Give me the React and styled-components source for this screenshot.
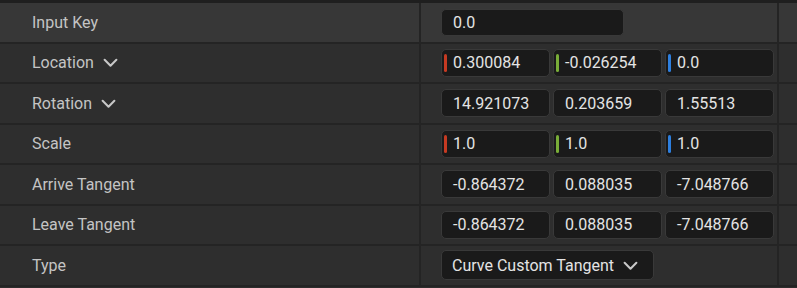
import React from "react";
import styled, { createGlobalStyle } from "styled-components";

const Global = createGlobalStyle`
  html, body { margin: 0; padding: 0; background: #2d2d2d; }
  body { font-family: Roboto, "Noto Sans", sans-serif; }
`;

const Panel = styled.div`
  width: 797px;
  height: 288px;
  overflow: hidden;
  background: #2d2d2d;
  border-top: 3px solid #1f1f1f;
  box-sizing: border-box;
`;

const Row = styled.div`
  display: grid;
  grid-template-columns: 421px 358px 1fr;
  height: 38.5px;
  border-bottom: 2px solid #242424;
  background: ${(p) => (p.$hover ? "#373737" : "#2e2e2e")};
`;

const LabelCell = styled.div`
  display: flex;
  align-items: center;
  gap: 9px;
  padding-left: 32px;
  border-right: 2px solid #242424;
  color: #c4c4c4;
  font-size: 16px;
`;

const ValueCell = styled.div`
  display: flex;
  align-items: center;
  gap: 3.5px;
  padding-left: 20px;
  border-right: 2px solid #242424;
`;

const Field = styled.div`
  position: relative;
  box-sizing: border-box;
  width: ${(p) => p.$w}px;
  height: ${(p) => p.$h || 28}px;
  display: flex;
  align-items: center;
  gap: 9px;
  padding-left: ${(p) => p.$pl || 11}px;
  background: #1a1a1a;
  border: 1px solid #393939;
  border-radius: 5px;
  color: #e4e4e4;
  font-size: 16px;
`;

const Axis = styled.span`
  position: absolute;
  left: 2px;
  top: 4px;
  bottom: 4px;
  width: 3px;
  border-radius: 2px;
  background: ${(p) => p.$c};
`;

const Chevron = ({ size = 15 }) => (
  <svg width={size} height={size} viewBox="0 0 14 14" fill="none">
    <path d="M1.5 4.5 L7 10 L12.5 4.5" stroke="#c8c8c8" strokeWidth="1.9" strokeLinecap="round" strokeLinejoin="round" />
  </svg>
);

const AXIS = ["#c63a22", "#79ad38", "#2d7fdf"];

const Vec = ({ values, colored }) =>
  values.map((v, i) => (
    <Field key={i} $w={108.5}>
      {colored && <Axis $c={AXIS[i]} />}
      {v}
    </Field>
  ));

export default function App() {
  return (
    <>
      <Global />
      <Panel>
        <Row $hover>
          <LabelCell>Input Key</LabelCell>
          <ValueCell>
            <Field $w={183} $h={27}>0.0</Field>
          </ValueCell>
          <div />
        </Row>
        <Row>
          <LabelCell>
            Location <Chevron />
          </LabelCell>
          <ValueCell>
            <Vec colored values={["0.300084", "-0.026254", "0.0"]} />
          </ValueCell>
          <div />
        </Row>
        <Row>
          <LabelCell>
            Rotation <Chevron />
          </LabelCell>
          <ValueCell>
            <Vec values={["14.921073", "0.203659", "1.55513"]} />
          </ValueCell>
          <div />
        </Row>
        <Row>
          <LabelCell>Scale</LabelCell>
          <ValueCell>
            <Vec colored values={["1.0", "1.0", "1.0"]} />
          </ValueCell>
          <div />
        </Row>
        <Row>
          <LabelCell>Arrive Tangent</LabelCell>
          <ValueCell>
            <Vec values={["-0.864372", "0.088035", "-7.048766"]} />
          </ValueCell>
          <div />
        </Row>
        <Row>
          <LabelCell>Leave Tangent</LabelCell>
          <ValueCell>
            <Vec values={["-0.864372", "0.088035", "-7.048766"]} />
          </ValueCell>
          <div />
        </Row>
        <Row>
          <LabelCell>Type</LabelCell>
          <ValueCell>
            <Field $w={213} $h={30} $pl={10}>
              Curve Custom Tangent <Chevron />
            </Field>
          </ValueCell>
          <div />
        </Row>
      </Panel>
    </>
  );
}
